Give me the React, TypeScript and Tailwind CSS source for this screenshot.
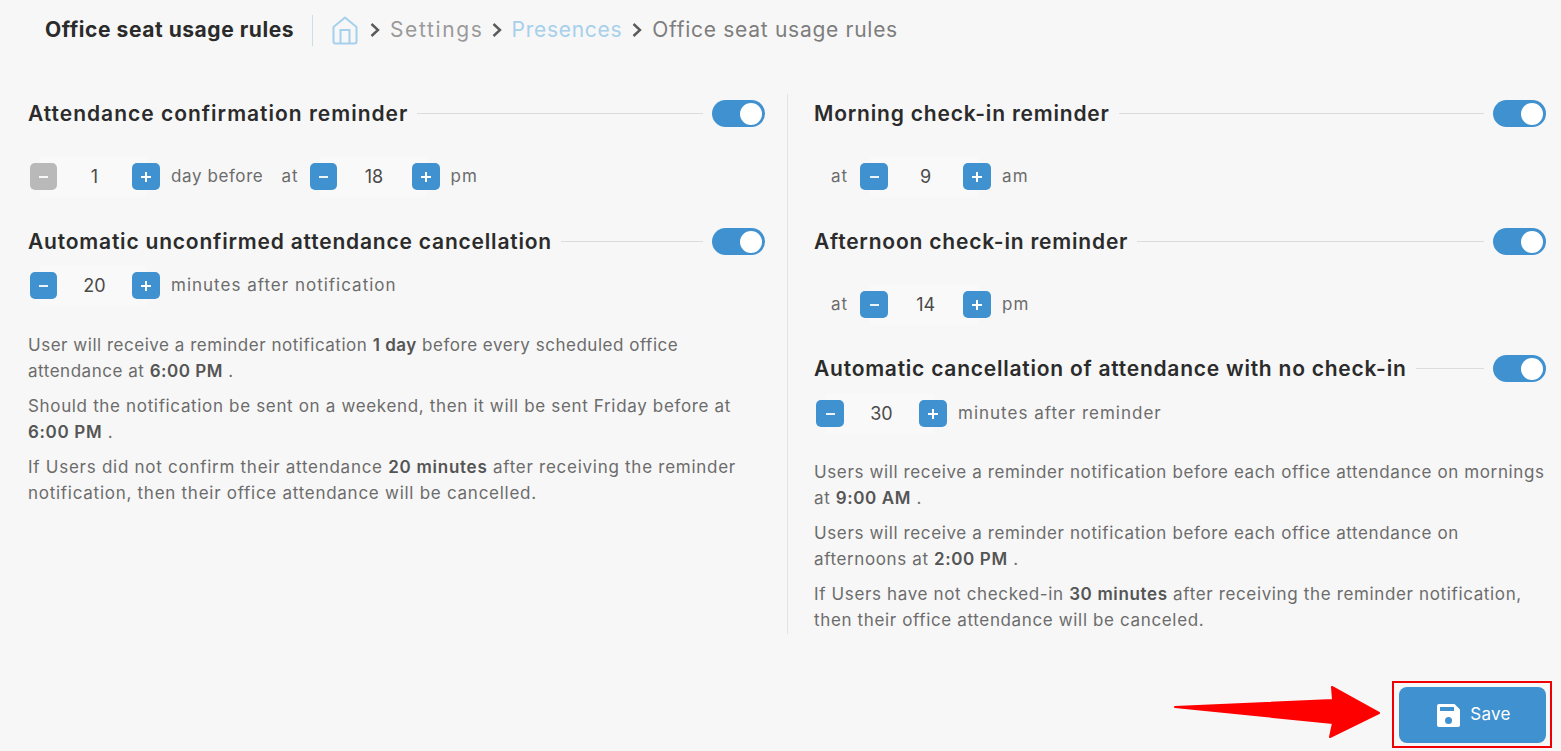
const FONT = "font-['Inter','Liberation_Sans',sans-serif]";

function Stepper({value, disabled, wide}: {value: string; disabled?: boolean; wide?: boolean}) {
    return (
        <div className={`relative flex h-[27px] items-center justify-between ${wide ? 'w-[131px]' : 'w-[130px]'}`}>
            <span className="absolute -top-[6px] right-[13px] -bottom-[7px] left-[10px] bg-[#f9f9f9]"/>
            <button className={`relative flex h-[27px] items-center justify-center rounded-[5px] ${wide ? 'w-[28px]' : 'w-[27px]'} ${disabled ? 'bg-[#b9b9b9]' : 'bg-[#4091d0]'}`}>
                <span className="h-[2px] w-[9px] bg-white opacity-90"/>
            </button>
            <span className="relative text-[18px] text-[#4a4a4a]">{value}</span>
            <button className="relative flex h-[27px] w-[28px] items-center justify-center rounded-[5px] bg-[#4091d0]">
                <span className="h-[2px] w-[10px] bg-white"/>
                <span className="absolute h-[10px] w-[2px] bg-white"/>
            </button>
        </div>
    );
}

function Toggle() {
    return (
        <div className="flex h-[27px] w-[53px] shrink-0 items-center justify-end rounded-full bg-[#4091d0] pr-[3px]">
            <span className="h-[22px] w-[22px] rounded-full bg-white"/>
        </div>
    );
}

function Heading({title, className, track}: {title: string; className?: string; track?: string}) {
    return (
        <div className={`flex h-[27px] items-center ${className ?? ''}`}>
            <h2 className={`text-[21px] font-semibold whitespace-nowrap text-[#2b2b2b] ${track ?? 'tracking-[0.8px]'}`}>{title}</h2>
            <span className="mx-[9px] h-px flex-1 bg-[#dcdcdc]"/>
            <Toggle/>
        </div>
    );
}

function Label({children, className, track}: {children: string; className?: string; track?: string}) {
    return <span className={`text-[17px] text-[#6c6c6c] ${track ?? 'tracking-[1px]'} ${className ?? ''}`}>{children}</span>;
}

function Note({children, track}: {children: React.ReactNode; track?: string}) {
    return <p className={`text-[17px] leading-[26px] whitespace-nowrap text-[#6c6c6c] [&_b]:font-semibold [&_b]:text-[#555] ${track ?? 'tracking-[0.62px]'}`}>{children}</p>;
}

function HomeIcon() {
    return (
        <svg className="mr-[2px]" width="26" height="29" viewBox="0 0 26 29" fill="none" stroke="#a6d0ec" strokeWidth="2">
            <path d="M1.500 11 13 1.500 24.500 11V25.500a2 2 0 0 1-2 2h-19a2 2 0 0 1-2-2z" strokeLinejoin="round"/>
            <path d="M8.500 27.500V14h9v13.500"/>
        </svg>
    );
}

function Chevron() {
    return (
        <svg width="10" height="14" viewBox="0 0 10 14" fill="none" stroke="#5a5a5a" strokeWidth="2.4">
            <path d="M1.500 1 8 7l-6.500 6"/>
        </svg>
    );
}

function SaveIcon() {
    return (
        <svg width="23" height="23" viewBox="0 0 23 23">
            <path d="M2 0H17.500L23 5.500V21a2 2 0 0 1-2 2H2a2 2 0 0 1-2-2V2a2 2 0 0 1 2-2z" fill="#fff"/>
            <rect x="3" y="3" width="14" height="4" fill="#4091d0"/>
            <circle cx="11.500" cy="16.500" r="3.500" fill="#4091d0"/>
        </svg>
    );
}

export default function App() {
    return (
        <div className={`relative h-[751px] w-full overflow-hidden bg-[#f7f7f7] ${FONT}`}>
            <header className="flex h-[60px] items-center pl-[45px]">
                <h1 className="w-[249px] text-[21px] font-bold tracking-[0.55px] whitespace-nowrap text-[#2b2b2b]">Office seat usage rules</h1>
                <span className="ml-[18px] h-[31px] w-px bg-[#cfdde6]"/>
                <div className="ml-[19px] flex items-center gap-[10px] text-[21px] whitespace-nowrap text-[#9a9a9a]">
                    <HomeIcon/>
                    <Chevron/>
                    <span className="-mr-[2px] tracking-[1.65px]">Settings</span>
                    <Chevron/>
                    <span className="tracking-[0.7px] text-[#a6d0ec]">Presences</span>
                    <Chevron/>
                    <span className="tracking-[0.72px] text-[#7d7d7d]">Office seat usage rules</span>
                </div>
            </header>

            <main className="flex pt-[34px] pr-[15px] pl-[28px]">
                <section className="w-[737px] shrink-0 pt-[6px]">
                    <Heading title="Attendance confirmation reminder" track="tracking-[1px]"/>
                    <div className="mt-[36px] flex items-center pl-[2px]">
                        <Stepper value="1" disabled/>
                        <Label className="ml-[11px]" track="tracking-[0.6px]">day before</Label>
                        <Label className="mr-[11px] ml-[18px]">at</Label>
                        <Stepper value="18"/>
                        <Label className="ml-[11px]">pm</Label>
                    </div>
                    <Heading title="Automatic unconfirmed attendance cancellation" className="mt-[38px]"/>
                    <div className="mt-[17px] flex items-center pl-[2px]">
                        <Stepper value="20"/>
                        <Label className="ml-[11px]">minutes after notification</Label>
                    </div>
                    <div className="mt-[33px] flex flex-col gap-[9px]">
                        <Note track="tracking-[0.52px]">User will receive a reminder notification <b>1 day</b> before every scheduled office<br/>attendance at <b>6:00 PM</b> .</Note>
                        <Note track="tracking-[0.66px]">Should the notification be sent on a weekend, then it will be sent Friday before at<br/><b>6:00 PM</b> .</Note>
                        <Note track="tracking-[0.73px]">If Users did not confirm their attendance <b>20 minutes</b> after receiving the reminder<br/>notification, then their office attendance will be cancelled.</Note>
                    </div>
                </section>

                <div className="ml-[22px] h-[540px] w-px shrink-0 bg-[#dfe3e6]"/>

                <section className="ml-[26px] flex-1 pt-[6px]">
                    <Heading title="Morning check-in reminder"/>
                    <div className="mt-[36px] flex items-center pl-[17px]">
                        <Label className="mr-[12px]">at</Label>
                        <Stepper value="9" wide/>
                        <Label className="ml-[11px]">am</Label>
                    </div>
                    <Heading title="Afternoon check-in reminder" className="mt-[38px]"/>
                    <div className="mt-[36px] flex items-center pl-[17px]">
                        <Label className="mr-[12px]">at</Label>
                        <Stepper value="14" wide/>
                        <Label className="ml-[11px]">pm</Label>
                    </div>
                    <Heading title="Automatic cancellation of attendance with no check-in" className="mt-[37px]" track="tracking-[0.76px]"/>
                    <div className="mt-[18px] flex items-center pl-[2px]">
                        <Stepper value="30" wide/>
                        <Label className="ml-[11px]">minutes after reminder</Label>
                    </div>
                    <div className="mt-[32px] flex flex-col gap-[9px]">
                        <Note>Users will receive a reminder notification before each office attendance on mornings<br/>at <b>9:00 AM</b> .</Note>
                        <Note>Users will receive a reminder notification before each office attendance on<br/>afternoons at <b>2:00 PM</b> .</Note>
                        <Note track="tracking-[0.64px]">If Users have not checked-in <b>30 minutes</b> after receiving the reminder notification,<br/>then their office attendance will be canceled.</Note>
                    </div>
                </section>
            </main>

            <div className="mt-[53px] flex justify-end pr-[15px]">
                <button className="flex h-[56px] w-[147px] items-center justify-center gap-[10px] rounded-[8px] bg-[#4091d0] pl-[3px] text-[17px] tracking-[0.3px] text-white">
                    <SaveIcon/>
                    Save
                </button>
            </div>

            {/* annotation overlay */}
            <div className="absolute top-[681px] left-[1392px] h-[67px] w-[160px] border-2 border-[#f00000]"/>
            <svg className="absolute top-[680px] left-[1170px]" width="215" height="62" viewBox="0 0 215 62">
                <path d="M5 27 163 20 162 7 209 33 160 57 163 43z" fill="#ff0000" stroke="#ff0000" strokeWidth="2" strokeLinejoin="round"/>
            </svg>
        </div>
    );
}
